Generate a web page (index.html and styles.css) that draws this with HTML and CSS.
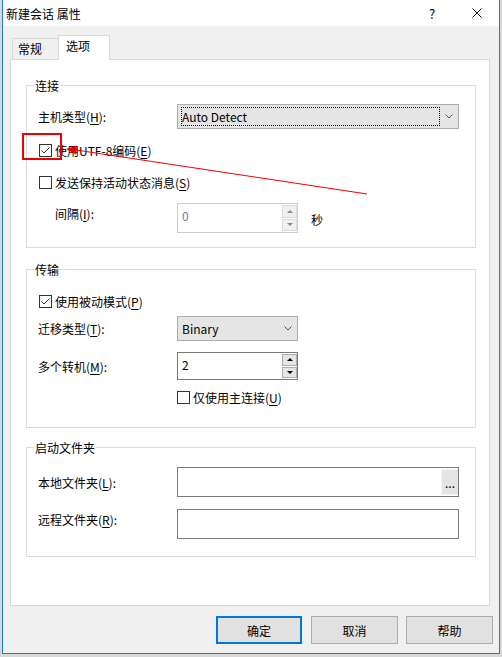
FILE: index.html
```html
<!DOCTYPE html>
<html>
  <head>
    <meta charset="utf-8">
    <link rel="stylesheet" href="styles.css">
  </head>

  <body>
    <div class="dialog">
      <!-- title bar -->
      <div class="titlebar">
        <span class="title">新建会话 属性</span>
        <span class="help">?</span>
        <svg class="close" width="10" height="10" viewBox="0 0 10 10">
          <path d="M0.5 0.5 L9.5 9.5 M9.5 0.5 L0.5 9.5" stroke="#000" stroke-width="1" fill="none"/>
        </svg>
      </div>

      <div class="client">
        <!-- tabs -->
        <div class="tabs">
          <div class="tab">常规</div>
          <div class="tab active">选项</div>
        </div>

        <div class="panel">
          <!-- connection -->
          <div class="group g-conn">
            <span class="group-title">连接</span>
            <div class="row r-host">
              <span class="lbl">主机类型(<u>H</u>):</span>
              <div class="combo wide">
                <span class="focus-rect">Auto Detect</span>
                <span class="chev"><svg width="8" height="5" viewBox="0 0 8 5"><polyline points="0.5,0.5 4,4 7.5,0.5" stroke="#555" fill="none"/></svg></span>
              </div>
            </div>
            <div class="row check-row r-utf">
              <span class="cb"><svg width="11" height="11" viewBox="0 0 11 11"><polyline points="1.5,5.5 4,8 9.5,2.5" stroke="#333" fill="none"/></svg></span>
              <span>使用UTF-8编码(<u>E</u>)</span>
            </div>
            <div class="row check-row r-keep">
              <span class="cb"></span>
              <span>发送保持活动状态消息(<u>S</u>)</span>
            </div>
            <div class="row r-interval">
              <span class="lbl lbl-top indent">间隔(<u>I</u>):</span>
              <div class="spin disabled tall">
                <span class="val">0</span>
                <span class="btns">
                  <span class="spin-btn"><i class="up"></i></span>
                  <span class="spin-btn"><i class="down"></i></span>
                </span>
              </div>
              <span class="unit">秒</span>
            </div>
          </div>

          <!-- transfer -->
          <div class="group g-xfer">
            <span class="group-title">传输</span>
            <div class="row check-row r-passive">
              <span class="cb"><svg width="11" height="11" viewBox="0 0 11 11"><polyline points="1.5,5.5 4,8 9.5,2.5" stroke="#333" fill="none"/></svg></span>
              <span>使用被动模式(<u>P</u>)</span>
            </div>
            <div class="row r-type">
              <span class="lbl">迁移类型(<u>T</u>):</span>
              <div class="combo narrow">
                <span class="combo-text">Binary</span>
                <span class="chev"><svg width="8" height="5" viewBox="0 0 8 5"><polyline points="0.5,0.5 4,4 7.5,0.5" stroke="#555" fill="none"/></svg></span>
              </div>
            </div>
            <div class="row r-count">
              <span class="lbl">多个转机(<u>M</u>):</span>
              <div class="spin">
                <span class="val">2</span>
                <span class="btns">
                  <span class="spin-btn"><i class="up"></i></span>
                  <span class="spin-btn"><i class="down"></i></span>
                </span>
              </div>
            </div>
            <div class="row check-row r-primary">
              <span class="cb"></span>
              <span>仅使用主连接(<u>U</u>)</span>
            </div>
          </div>

          <!-- start folders -->
          <div class="group g-folder">
            <span class="group-title">启动文件夹</span>
            <div class="row r-local">
              <span class="lbl">本地文件夹(<u>L</u>):</span>
              <div class="textbox">
                <span class="browse">...</span>
              </div>
            </div>
            <div class="row r-remote">
              <span class="lbl lbl-top">远程文件夹(<u>R</u>):</span>
              <div class="textbox"></div>
            </div>
          </div>
        </div>

        <!-- dialog buttons -->
        <div class="buttons">
          <div class="btn default">确定</div>
          <div class="btn">取消</div>
          <div class="btn">帮助</div>
        </div>
      </div>
    </div>

    <!-- annotation -->
    <svg class="annot" width="502" height="657" viewBox="0 0 502 657">
      <rect x="23" y="134" width="38" height="25" stroke="#ee0000" stroke-width="2" fill="none"/>
      <line x1="76" y1="150" x2="367" y2="194" stroke="#ee0000" stroke-width="1"/>
      <polygon points="66,149 77,145.5 76,154.5" fill="#ee0000"/>
    </svg>
  </body>
</html>
```

FILE: styles.css
```css
* {
  box-sizing: border-box;
}

body {
  margin: 0;
  width: 502px;
  height: 657px;
  overflow: hidden;
  position: relative;
  background: #d8d8d8;
  font-family: "Noto Sans CJK SC", "Microsoft YaHei", sans-serif;
  font-size: 12px;
  line-height: 17px;
  color: #000;
}

u {
  text-underline-offset: 2px;
}

.dialog {
  margin-left: 2px;
  width: 498px;
  height: 654px;
  border: 1px solid #1a7fd4;
  border-top: 0;
  background: #f0f0f0;
}

/* title bar */
.titlebar {
  height: 26px;
  background: #fff;
  display: flex;
  align-items: center;
  padding-left: 3px;
}

.help {
  margin-left: auto;
  width: 12px;
  text-align: center;
  font-size: 13px;
}

.close {
  margin: 0 17px 0 34px;
}

/* tabs */
.client {
  height: 627px;
}

.tabs {
  height: 33px;
  display: flex;
  align-items: flex-end;
  padding-left: 9px;
}

.tab {
  width: 46px;
  height: 21px;
  padding-left: 5px;
  line-height: 19px;
  border: 1px solid #d9d9d9;
  border-right: 0;
  border-bottom: 0;
}

.tab.active {
  width: 52px;
  height: 25px;
  padding-left: 7px;
  line-height: 20px;
  margin-bottom: -1px;
  background: #fff;
  border-right: 1px solid #d9d9d9;
  position: relative;
  z-index: 1;
}

.panel {
  margin-left: 7px;
  width: 480px;
  height: 547px;
  border: 1px solid #d9d9d9;
  background: #fff;
  padding: 25px 0 0 15px;
}

/* group boxes */
.group {
  width: 450px;
  border: 1px solid #dcdcdc;
}

.g-conn {
  height: 163px;
}

.g-xfer {
  height: 159px;
  margin-top: 21px;
}

.g-folder {
  height: 110px;
  margin-top: 19px;
}

.group-title {
  display: table;
  height: 17px;
  margin: -9px 0 0 7px;
  padding: 0 1px;
  background: #fff;
}

.row {
  display: flex;
  align-items: center;
  padding-left: 11px;
}

.check-row {
  padding-left: 12px;
  height: 13px;
}

.lbl {
  width: 139px;
  flex: none;
}

.lbl.indent {
  width: 122px;
  margin-left: 17px;
}

.lbl-top {
  align-self: flex-start;
  padding-top: 2px;
}

.r-interval .lbl-top {
  margin-left: 17px;
}

.r-host { margin-top: 10px; }
.r-utf { margin-top: 15px; }
.r-keep { margin-top: 19px; }
.r-interval { margin-top: 14px; padding-left: 11px; }
.r-passive { margin-top: 17px; }
.r-type { margin-top: 8px; }
.r-count { margin-top: 11px; }
.r-primary { margin-top: 11px; padding-left: 150px; }
.r-local { margin-top: 11px; }
.r-remote { margin-top: 12px; }

.r-interval .lbl.indent {
  margin-left: 17px;
}

/* checkbox */
.cb {
  width: 13px;
  height: 13px;
  flex: none;
  border: 1px solid #333;
  background: #fff;
  margin-right: 3px;
  display: flex;
}

/* combo box */
.combo {
  height: 25px;
  border: 1px solid #adadad;
  background: #e5e5e5;
  display: flex;
  align-items: center;
}

.combo.wide {
  width: 282px;
}

.combo.narrow {
  width: 121px;
}

.focus-rect {
  flex: 1;
  align-self: stretch;
  margin: 2px 0 2px 3px;
  border: 1px dotted #000;
  display: flex;
  align-items: center;
}

.combo-text {
  flex: 1;
  padding-left: 4px;
}

.chev {
  width: 18px;
  display: flex;
  justify-content: center;
}

/* spin box */
.spin {
  width: 121px;
  height: 28px;
  border: 1px solid #7a7a7a;
  background: #fff;
  display: flex;
}

.spin.tall {
  height: 30px;
}

.spin .val {
  flex: 1;
  padding: 3px 0 0 4px;
}

.btns {
  width: 15px;
  margin: 1px 0;
  display: flex;
  flex-direction: column;
  gap: 1px;
}

.spin-btn {
  flex: 1;
  background: #e5e5e5;
  border: 1px solid #adadad;
  display: flex;
  align-items: center;
  justify-content: center;
}

.up {
  border-left: 3px solid transparent;
  border-right: 3px solid transparent;
  border-bottom: 3px solid #000;
}

.down {
  border-left: 3px solid transparent;
  border-right: 3px solid transparent;
  border-top: 3px solid #000;
}

.spin.disabled {
  border-color: #cccccc;
}

.spin.disabled .val {
  color: #6d7c99;
}

.spin.disabled .spin-btn {
  background: #f0f0f0;
  border-color: #dcdcdc;
}

.spin.disabled .up {
  border-bottom-color: #888;
}

.spin.disabled .down {
  border-top-color: #888;
}

.unit {
  margin-left: 13px;
  padding-top: 2px;
}

/* text box */
.textbox {
  width: 282px;
  height: 30px;
  border: 1px solid #7a7a7a;
  background: #fff;
  display: flex;
  justify-content: flex-end;
  padding: 1px 0;
}

.browse {
  width: 17px;
  background: #e5e5e5;
  border: 1px solid #f5f5f5;
  border-right: 0;
  display: flex;
  align-items: center;
  justify-content: center;
}

/* dialog buttons */
.buttons {
  display: flex;
  justify-content: flex-end;
  gap: 8px;
  padding: 10px 6px 0 0;
}

.btn {
  width: 87px;
  height: 28px;
  border: 1px solid #adadad;
  background: #e1e1e1;
  display: flex;
  align-items: center;
  justify-content: center;
}

.btn.default {
  width: 86px;
  margin-right: 1px;
  border: 2px solid #0078d7;
}

/* red markup over the screenshot */
.annot {
  position: absolute;
  top: 0;
  left: 0;
  pointer-events: none;
}
```
